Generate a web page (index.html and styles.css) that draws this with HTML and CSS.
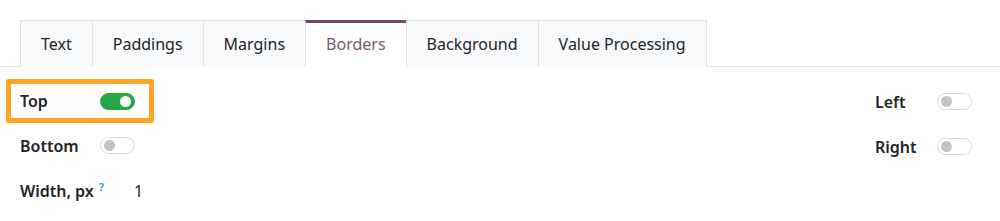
FILE: index.html
```html
<!DOCTYPE html>
<html lang="en">
<head>
  <meta charset="UTF-8">
  <title>Borders</title>
  <link rel="stylesheet" href="styles.css">
</head>
<body>
  <ul class="tabs">
    <li class="tab">Text</li>
    <li class="tab">Paddings</li>
    <li class="tab">Margins</li>
    <li class="tab active">Borders</li>
    <li class="tab">Background</li>
    <li class="tab">Value Processing</li>
  </ul>

  <div class="panel">
    <div class="col">
      <div class="row highlight">
        <span class="label">Top</span>
        <span class="toggle on"></span>
      </div>
      <div class="row">
        <span class="label">Bottom</span>
        <span class="toggle"></span>
      </div>
      <div class="row">
        <span class="label label-wide">Width, px<sup class="help">?</sup></span>
        <span class="value">1</span>
      </div>
    </div>
    <div class="col col-right">
      <div class="row">
        <span class="label label-short">Left</span>
        <span class="toggle"></span>
      </div>
      <div class="row">
        <span class="label label-short">Right</span>
        <span class="toggle"></span>
      </div>
    </div>
  </div>
</body>
</html>
```

FILE: styles.css
```css
body {
  margin: 0;
  font-family: "Noto Sans", "Open Sans", Arial, sans-serif;
  font-size: 16px;
  color: #212529;
  background: #fff;
}
.tabs {
  list-style: none;
  margin: 20px 0 0 0;
  padding: 0 0 0 20px;
  display: flex;
  border-bottom: 1px solid #dee2e6;
}
.tab {
  height: 47px;
  padding: 0 20px;
  display: flex;
  align-items: center;
  background: #f8f9fb;
  border: 1px solid #dee2e6;
  border-bottom: none;
  margin-left: -1px;
  margin-bottom: -1px;
  box-sizing: border-box;
}
.tab:first-child {
  margin-left: 0;
}
.tab.active {
  background: #fff;
  color: #7a5b73;
  border-top: 3px solid #714b67;
  padding-bottom: 2px;
  border-bottom: 1px solid #fff;
}
.panel {
  display: flex;
  justify-content: space-between;
  margin-top: 12px;
  padding-left: 6px;
  padding-right: 28px;
}
.row {
  display: flex;
  align-items: center;
  height: 45px;
  box-sizing: border-box;
  border: 5px solid transparent;
  border-radius: 3px;
  padding: 0 9px;
  width: fit-content;
}
.col-right .row {
  padding-right: 0;
  border-right: none;
}
.row.highlight {
  border-color: #ffa424;
  padding-right: 14px;
  height: 44px;
}
.label {
  width: 80px;
  font-weight: 600;
}
.label-wide {
  width: 114px;
}
.label-short {
  width: 62px;
}
.help {
  color: #1b96c8;
  font-size: 11px;
  font-weight: 600;
  margin-left: 5px;
  vertical-align: 6px;
}
.toggle {
  width: 35px;
  height: 17px;
  border-radius: 9px;
  border: 1px solid #d8d8d8;
  box-sizing: border-box;
  background: #fff;
  position: relative;
}
.toggle::after {
  content: "";
  position: absolute;
  top: 2px;
  left: 3px;
  width: 11px;
  height: 11px;
  border-radius: 50%;
  background: #c2c2c2;
}
.toggle.on {
  background: #28a745;
  border-color: #28a745;
}
.toggle.on::after {
  left: auto;
  right: 3px;
  background: #fff;
}
```
